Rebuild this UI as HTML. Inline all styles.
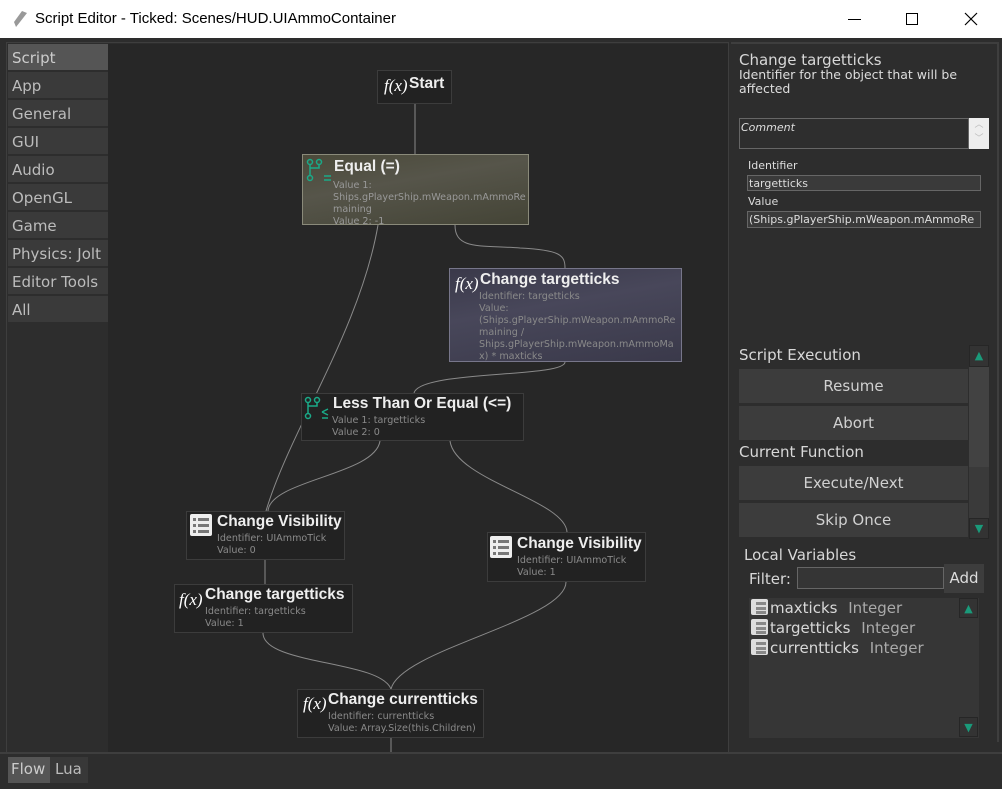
<!DOCTYPE html>
<html><head><meta charset="utf-8"><style>
*{margin:0;padding:0;box-sizing:border-box}
body{width:1002px;height:789px;overflow:hidden;background:#2d2d2d;font-family:"DejaVu Sans","Liberation Sans",sans-serif;color:#ddd;position:relative}
.a{position:absolute}
#title{left:0;top:0;width:1002px;height:38px;background:#fff;color:#000;font:15px "Liberation Sans",sans-serif}
.side{left:8px;width:100px;height:27px;background:#3a3a3a;color:#bcbcbc;font-size:15px;padding:5px 4px 0;border-bottom:1px solid #2d2d2d}
#canvas{left:108px;top:44px;width:620px;height:708px;background:#272727}
.node{position:absolute;background:#222;border:1px solid #3c3c3c;color:#fff}
.node b{position:absolute;font:bold 15.5px "Liberation Sans",sans-serif;white-space:nowrap;color:#eee}
.node .d{position:absolute;font-size:9.6px;line-height:12px;color:#8a8a8a;white-space:nowrap}
.fx{position:absolute;font:italic 17px "Liberation Serif",serif;color:#fff}
.btn{left:739px;width:229px;height:34px;background:#3c3c3c;text-align:center;font-size:15px;line-height:34px;color:#d0d0d0}
.lbl{font-size:15px;color:#d8d8d8}
.inp{background:#3a3a3a;border:1px solid #666;font-size:11px;color:#ddd;padding:1px 1px;white-space:nowrap;overflow:hidden}
.sb{background:#333;border:1px solid #262626;color:#1a9a7a;font-size:11px;text-align:center;line-height:20px}
.li{position:absolute;left:751px;width:17px;height:16px;background:#ddd;border-radius:2px}
.li i{position:absolute;left:5px;height:3px;width:10px;background:#888}
</style></head><body>
<div id="title" class="a">
<svg class="a" style="left:12px;top:10px" width="16" height="18"><path d="M4 17 L2 12 L10 1 L15 3 L8 12 Z" fill="#999"/></svg>
<div class="a" style="left:35px;top:10px">Script Editor - Ticked: Scenes/HUD.UIAmmoContainer</div>
<div class="a" style="left:848px;top:19px;width:13px;height:1px;background:#000"></div>
<div class="a" style="left:906px;top:13px;width:12px;height:12px;border:1px solid #000"></div>
<svg class="a" style="left:964px;top:12px" width="14" height="14"><path d="M1 1L13 13M13 1L1 13" stroke="#000" stroke-width="1.2"/></svg>
</div>
<div class="a" style="left:0;top:38px;width:1002px;height:751px;background:#2d2d2d"></div>
<div class="a" style="left:6px;top:42px;width:723px;height:712px;border:1px solid #3e3e3e"></div>
<div class="a side" style="top:44px;background:#555;color:#ccc">Script</div>
<div class="a side" style="top:72px">App</div>
<div class="a side" style="top:100px">General</div>
<div class="a side" style="top:128px">GUI</div>
<div class="a side" style="top:156px">Audio</div>
<div class="a side" style="top:184px">OpenGL</div>
<div class="a side" style="top:212px">Game</div>
<div class="a side" style="top:240px">Physics: Jolt</div>
<div class="a side" style="top:268px">Editor Tools</div>
<div class="a side" style="top:296px">All</div>
<div id="canvas" class="a"></div>
<svg class="a" style="left:0;top:0" width="1002" height="789" fill="none" stroke="#8a8a8a" stroke-width="1">
<path d="M415 104 V154"/>
<path d="M378 225 C360 330 290 430 266 511"/>
<path d="M455 225 C455 250 480 245 520 248 C560 250 565 255 565 268"/>
<path d="M565 362 C565 378 420 370 414 393"/>
<path d="M380 441 C375 475 270 480 268 511"/>
<path d="M450 441 C455 480 565 500 567 532"/>
<path d="M265 560 V584"/>
<path d="M263 633 C263 665 380 660 391 689"/>
<path d="M566 582 C566 620 400 650 391 689"/>
<path d="M391 738 V752"/>
</svg>
<div class="node" style="left:377px;top:70px;width:75px;height:34px"><span class="fx" style="left:6px;top:5px">f(x)</span><b style="left:31px;top:4px">Start</b></div>
<div class="node" style="left:302px;top:154px;width:227px;height:71px;background:linear-gradient(170deg,#4b4a3a,#56554a 40%,#444436);border-color:#8a8a7a">
<svg class="a" style="left:3px;top:3px" width="26" height="26" fill="none" stroke="#1aaa88" stroke-width="1.5"><circle cx="4" cy="4" r="2.5"/><circle cx="13" cy="4" r="2.5"/><circle cx="4" cy="20" r="2.5"/><path d="M4 7V17M13 7V10H4"/><path d="M18 18h7M18 22h7"/></svg>
<b style="left:31px;top:3px">Equal (=)</b>
<div class="d" style="left:30px;top:25px;color:#999">Value 1:<br>Ships.gPlayerShip.mWeapon.mAmmoRe<br>maining<br>Value 2: -1</div></div>
<div class="node" style="left:449px;top:268px;width:233px;height:94px;background:linear-gradient(170deg,#3a394a,#48475a 40%,#3a394a);border-color:#77768a">
<span class="fx" style="left:5px;top:5px">f(x)</span><b style="left:30px;top:2px">Change targetticks</b>
<div class="d" style="left:29px;top:22px">Identifier: targetticks<br>Value:<br>(Ships.gPlayerShip.mWeapon.mAmmoRe<br>maining /<br>Ships.gPlayerShip.mWeapon.mAmmoMa<br>x) * maxticks</div></div>
<div class="node" style="left:301px;top:393px;width:223px;height:48px">
<svg class="a" style="left:2px;top:2px" width="26" height="26" fill="none" stroke="#1aaa88" stroke-width="1.5"><circle cx="4" cy="4" r="2.5"/><circle cx="13" cy="4" r="2.5"/><circle cx="4" cy="20" r="2.5"/><path d="M4 7V17M13 7V10H4"/><path d="M18 16l6-3M18 16l6 3M18 22h6"/></svg>
<b style="left:31px;top:1px">Less Than Or Equal (&lt;=)</b>
<div class="d" style="left:30px;top:21px">Value 1: targetticks<br>Value 2: 0</div></div>
<div class="node" style="left:186px;top:511px;width:159px;height:49px">
<svg class="a" style="left:3px;top:2px" width="22" height="22"><rect x="0" y="0" width="22" height="22" rx="2" fill="#eee"/><g fill="#777"><rect x="3" y="4" width="3" height="3"/><rect x="8" y="4" width="11" height="3"/><rect x="3" y="10" width="3" height="3"/><rect x="8" y="10" width="11" height="3"/><rect x="3" y="16" width="3" height="3"/><rect x="8" y="16" width="11" height="3"/></g></svg>
<b style="left:30px;top:1px">Change Visibility</b>
<div class="d" style="left:30px;top:21px">Identifier: UIAmmoTick<br>Value: 0</div></div>
<div class="node" style="left:487px;top:532px;width:159px;height:50px">
<svg class="a" style="left:2px;top:3px" width="22" height="22"><rect x="0" y="0" width="22" height="22" rx="2" fill="#eee"/><g fill="#777"><rect x="3" y="4" width="3" height="3"/><rect x="8" y="4" width="11" height="3"/><rect x="3" y="10" width="3" height="3"/><rect x="8" y="10" width="11" height="3"/><rect x="3" y="16" width="3" height="3"/><rect x="8" y="16" width="11" height="3"/></g></svg>
<b style="left:29px;top:2px">Change Visibility</b>
<div class="d" style="left:29px;top:22px">Identifier: UIAmmoTick<br>Value: 1</div></div>
<div class="node" style="left:174px;top:584px;width:179px;height:49px">
<span class="fx" style="left:4px;top:5px">f(x)</span><b style="left:30px;top:1px">Change targetticks</b>
<div class="d" style="left:30px;top:21px">Identifier: targetticks<br>Value: 1</div></div>
<div class="node" style="left:297px;top:689px;width:187px;height:49px">
<span class="fx" style="left:5px;top:4px">f(x)</span><b style="left:30px;top:1px">Change currentticks</b>
<div class="d" style="left:30px;top:21px">Identifier: currentticks<br>Value: Array.Size(this.Children)</div></div>

<div class="a" style="left:731px;top:42px;width:268px;height:700px;border-right:2px solid #3e3e3e;border-top:2px solid #3e3e3e"></div>
<div class="a lbl" style="left:739px;top:51px">Change targetticks</div>
<div class="a" style="left:739px;top:68px;font-size:12.5px;line-height:14px;color:#ddd">Identifier for the object that will be<br>affected</div>
<div class="a" style="left:739px;top:118px;width:230px;height:31px;border:1px solid #666;background:#2e2e2e;font-style:italic;font-size:11px;padding:2px 1px">Comment</div>
<div class="a" style="left:969px;top:118px;width:20px;height:31px;background:#eee;color:#bbb;font-size:9px;text-align:center;line-height:14px">︿<br>﹀</div>
<div class="a" style="left:748px;top:159px;font-size:11px">Identifier</div>
<div class="a inp" style="left:747px;top:175px;width:234px;height:16px">targetticks</div>
<div class="a" style="left:748px;top:195px;font-size:11px">Value</div>
<div class="a inp" style="left:747px;top:211px;width:234px;height:17px">(Ships.gPlayerShip.mWeapon.mAmmoRe</div>

<div class="a lbl" style="left:739px;top:346px">Script Execution</div>
<div class="a" style="left:969px;top:345px;width:20px;height:193px;background:#3a3a3a"></div>
<div class="a sb" style="left:969px;top:345px;width:20px;height:22px">▲</div>
<div class="a" style="left:969px;top:367px;width:20px;height:100px;background:#424242"></div>
<div class="a sb" style="left:969px;top:518px;width:20px;height:21px">▼</div>
<div class="a btn" style="top:369px">Resume</div>
<div class="a btn" style="top:406px">Abort</div>
<div class="a lbl" style="left:739px;top:443px">Current Function</div>
<div class="a btn" style="top:466px">Execute/Next</div>
<div class="a btn" style="top:503px">Skip Once</div>

<div class="a lbl" style="left:744px;top:546px">Local Variables</div>
<div class="a lbl" style="left:749px;top:570px">Filter:</div>
<div class="a" style="left:797px;top:567px;width:147px;height:22px;background:#353535;border:1px solid #666"></div>
<div class="a" style="left:944px;top:564px;width:40px;height:29px;background:#3d3d3d;font-size:15px;text-align:center;line-height:29px">Add</div>
<div class="a" style="left:749px;top:598px;width:230px;height:140px;background:#363636"></div>
<div class="a sb" style="left:959px;top:598px;width:19px;height:20px">▲</div>
<div class="a sb" style="left:959px;top:717px;width:19px;height:20px">▼</div>
<div class="li" style="top:599px"><i style="top:3px"></i><i style="top:8px"></i><i style="top:12px"></i></div>
<div class="li" style="top:619px"><i style="top:3px"></i><i style="top:8px"></i><i style="top:12px"></i></div>
<div class="li" style="top:639px"><i style="top:3px"></i><i style="top:8px"></i><i style="top:12px"></i></div>
<div class="a lbl" style="left:770px;top:599px">maxticks <span style="color:#aaa;margin-left:6px">Integer</span></div>
<div class="a lbl" style="left:770px;top:619px">targetticks <span style="color:#aaa;margin-left:6px">Integer</span></div>
<div class="a lbl" style="left:770px;top:639px">currentticks <span style="color:#aaa;margin-left:6px">Integer</span></div>

<div class="a" style="left:0;top:752px;width:1002px;height:2px;background:#3e3e3e"></div>
<div class="a" style="left:8px;top:757px;width:42px;height:26px;background:#555;font-size:15px;padding:3px 3px;color:#ccc">Flow</div>
<div class="a" style="left:50px;top:757px;width:38px;height:26px;background:#383838;font-size:15px;padding:3px 5px;color:#bbb">Lua</div>
</body></html>
